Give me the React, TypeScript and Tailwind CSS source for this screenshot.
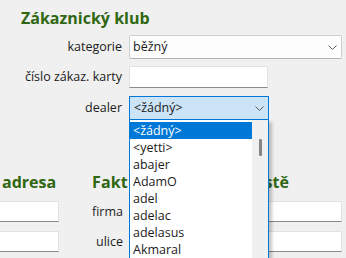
import React from "react";

const Chevron = () => (
  <svg width="9" height="5" viewBox="0 0 9 5" className="shrink-0">
    <path d="M0.5 0.5 L4.5 4.5 L8.5 0.5" fill="none" stroke="#5a5a5a" strokeWidth="1" />
  </svg>
);

const items = ["<žádný>", "<yetti>", "abajer", "AdamO", "adel", "adelac", "adelasus", "Akmaral"];

export default function App() {
  return (
    <div
      className="relative w-[346px] h-[258px] overflow-hidden bg-[#f0f0f0] text-[#1b1b1b]"
      style={{ fontFamily: '"Open Sans", "Noto Sans", sans-serif' }}
    >
      {/* Zákaznický klub */}
      <div className="pt-[7px]">
        <div className="pl-[21px] h-[22px] leading-[22px] text-[16px] font-bold text-[#2f6712]">
          Zákaznický klub
        </div>
        <div className="mt-[6px] grid grid-cols-[122px_auto] gap-x-[7px] items-center text-[12.5px]">
          <div className="text-right h-[24px] leading-[24px]">kategorie</div>
          <div className="w-[213px] h-[24px] flex items-center justify-between pl-[3px] pr-[4px] bg-[#fdfdfd] border border-[#cfcfcf] border-b-[#b5b5b5] rounded-[2px]">
            <span>běžný</span>
            <Chevron />
          </div>

          <div className="mt-[7px] text-right h-[22px] leading-[22px]">číslo zákaz. karty</div>
          <div className="mt-[7px] w-[139px] h-[22px] bg-white border border-[#e2e2e2] border-b-[#8a8a8a]" />

          <div className="mt-[8px] text-right h-[24px] leading-[24px]">dealer</div>
          <div className="mt-[8px] w-[140px] h-[24px] flex items-center justify-between pl-[4px] pr-[4px] bg-[#cce4f7] border border-[#0078d7]">
            <span>&lt;žádný&gt;</span>
            <Chevron />
          </div>
        </div>
      </div>

      {/* lower section */}
      <div className="mt-[51px] flex text-[12.5px]">
        <div className="w-[59px] shrink-0">
          <div className="pl-[2px] h-[22px] leading-[22px] text-[16px] font-bold text-[#2f6712] whitespace-nowrap">
            adresa
          </div>
          <div className="mt-[8px] h-[21px] bg-white border border-[#e2e2e2] border-l-0 border-b-[#8a8a8a]" />
          <div className="mt-[9px] h-[21px] bg-white border border-[#e2e2e2] border-l-0 border-b-[#8a8a8a]" />
        </div>
        <div className="ml-[33px]">
          <div className="h-[22px] leading-[22px] text-[16px] font-bold tracking-[0.15px] text-[#2f6712] whitespace-nowrap">
            Fakturační adresa místě
          </div>
          <div className="mt-[8px] flex items-center gap-[6px]">
            <div className="w-[31px] text-right h-[21px] leading-[21px]">firma</div>
            <div className="w-[213px] h-[21px] bg-white border border-[#e2e2e2] border-b-[#8a8a8a]" />
          </div>
          <div className="mt-[9px] flex items-center gap-[6px]">
            <div className="w-[31px] text-right h-[21px] leading-[21px]">ulice</div>
            <div className="w-[213px] h-[21px] bg-white border border-[#e2e2e2] border-b-[#8a8a8a]" />
          </div>
        </div>
      </div>

      {/* dropdown list overlay */}
      <div className="absolute left-[129px] top-[120px] w-[140px] h-[160px] flex bg-white border-x border-[#0078d7] shadow-[3px_2px_3px_rgba(0,0,0,0.22)] text-[12.5px]">
        <div className="flex-1 pt-[2px]">
          {items.map((it, i) => (
            <div
              key={it}
              className={
                i === 0
                  ? "h-[17px] leading-[17px] pl-[3px] bg-[#0078d7] text-white"
                  : "h-[17px] leading-[17px] pl-[3px] text-[#1b1b1b]"
              }
            >
              {it}
            </div>
          ))}
        </div>
        <div className="w-[16px] bg-[#f0f0f0] flex justify-center pt-[19px] pl-[1px]">
          <div className="w-[3px] h-[17px] bg-[#858585] rounded-[1px]" />
        </div>
      </div>
    </div>
  );
}
